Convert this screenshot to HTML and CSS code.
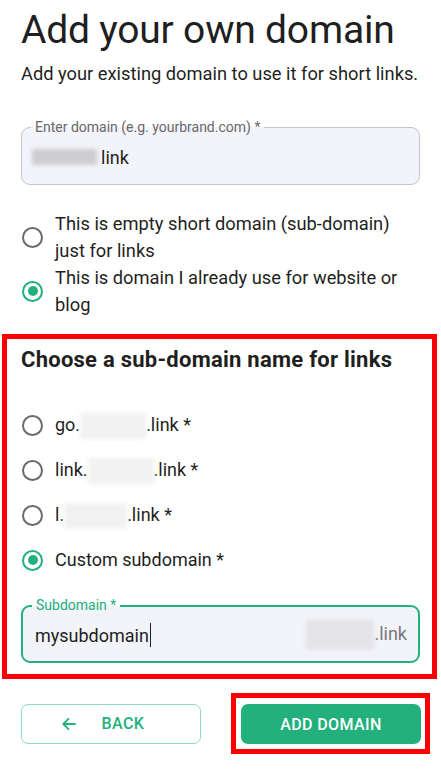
FILE: index.html
```html
<!DOCTYPE html>
<html>
<head>
<meta charset="utf-8">
<link rel="stylesheet" href="styles.css">
</head>
<body>
<div class="page">
  <h1 class="title">Add your own domain</h1>
  <p class="subtitle">Add your existing domain to use it for short links.</p>

  <div class="field">
    <span class="field-label">Enter domain (e.g. yourbrand.com) *</span>
    <div class="field-value"><span class="blur blur-dark"></span><span>link</span></div>
  </div>

  <div class="radio-group">
    <label class="radio">
      <span class="circle"></span>
      <span class="radio-text">This is empty short domain (sub-domain) just for links</span>
    </label>
    <label class="radio">
      <span class="circle checked"></span>
      <span class="radio-text">This is domain I already use for website or blog</span>
    </label>
  </div>
</div>

<section class="highlight">
  <h2 class="section-title">Choose a sub-domain name for links</h2>
  <div class="options">
    <div class="option"><span class="circle"></span><span class="opt-text">go.<span class="blur blur-light w66"></span>.link *</span></div>
    <div class="option"><span class="circle"></span><span class="opt-text">link.<span class="blur blur-light w66"></span>.link *</span></div>
    <div class="option"><span class="circle"></span><span class="opt-text">l.<span class="blur blur-light w63"></span>.link *</span></div>
    <div class="option"><span class="circle checked"></span><span class="opt-text">Custom subdomain *</span></div>
  </div>
  <div class="field field-active">
    <span class="field-label">Subdomain *</span>
    <div class="field-value"><span class="typed">mysubdomain</span><span class="caret"></span><span class="suffix"><span class="blur blur-mid"></span>.link</span></div>
  </div>
</section>

<div class="actions">
  <button class="btn btn-outline">
    <svg width="14" height="14" viewBox="0 0 14 14" fill="none" stroke="currentColor" stroke-width="1.8" stroke-linecap="round" stroke-linejoin="round"><path d="M13 7H1.5M6.5 1.8L1.3 7l5.2 5.2"/></svg>
    <span>BACK</span>
  </button>
  <div class="mark">
    <button class="btn btn-filled">ADD DOMAIN</button>
  </div>
</div>
</body>
</html>
```
FILE: styles.css
```css
* { box-sizing: border-box; }
body {
  margin: 0;
  font-family: Roboto, "Noto Sans", sans-serif;
  color: #1f1f22;
  background: #fff;
  width: 441px;
}
.page { padding: 0 21px; }
.title {
  margin: 0;
  padding-top: 8px;
  font-size: 39px;
  font-weight: 400;
  line-height: 44px;
  letter-spacing: -0.2px;
}
.subtitle {
  margin: 10px 0 0;
  font-size: 18.3px;
  line-height: 24px;
}
.field {
  position: relative;
  margin-top: 41px;
  height: 58px;
  border: 1px solid #c4c4c9;
  border-radius: 9px;
  background: #f3f4f9;
  display: flex;
  align-items: center;
  padding: 0 10px;
}
.field-label {
  position: absolute;
  top: -9px;
  left: 9px;
  padding: 0 4px;
  font-size: 14px;
  line-height: 16px;
  color: #68686d;
  background: linear-gradient(#fff 50%, #f3f4f9 50%);
}
.field-value {
  display: flex;
  align-items: center;
  font-size: 18px;
  width: 100%;
  margin-top: 2px;
}
.blur { display: inline-block; filter: blur(2px); }
.blur-dark {
  width: 65px; height: 16px;
  background: #cdcdd1;
  margin-right: 4px;
}
.blur-light {
  width: 66px; height: 26px;
  background: #f1f1f2;
  vertical-align: -8px;
}
.w63 { width: 63px; }
.blur-mid {
  width: 68px; height: 30px;
  background: #e3e3e8;
  vertical-align: -10px;
}
.radio-group {
  margin-top: 25px;
  display: flex;
  flex-direction: column;
}
.radio {
  display: flex;
  align-items: center;
  gap: 12px;
}
.circle {
  flex: none;
  width: 21px; height: 21px;
  border: 2px solid #6a6a6d;
  border-radius: 50%;
  position: relative;
  margin-left: 1px;
}
.circle.checked { border-color: #22b07d; }
.circle.checked::after {
  content: "";
  position: absolute;
  left: 3.5px; top: 3.5px;
  width: 10px; height: 10px;
  border-radius: 50%;
  background: #22b07d;
}
.radio-text {
  font-size: 18.3px;
  line-height: 27px;
  padding-right: 12px;
}
.highlight {
  margin: 16px 4px 0 2px;
  border: 5px solid #ff0000;
  padding: 8px 12px 11px 14px;
}
.section-title {
  margin: 0;
  font-size: 22px;
  font-weight: 700;
  line-height: 26px;
  letter-spacing: 0.25px;
}
.options {
  margin-top: 39px;
  display: flex;
  flex-direction: column;
  gap: 19px;
}
.option {
  display: flex;
  align-items: center;
  gap: 12px;
  height: 26px;
}
.opt-text { font-size: 18px; line-height: 26px; white-space: nowrap; }
.field-active {
  margin-top: 32px;
  border: 2px solid #22b07d;
  padding: 0 11px 0 12px;
}
.field-active .field-label {
  top: -10px;
  color: #22b07d;
  left: 9px;
}
.typed { color: #1f1f22; }
.caret { width: 1px; height: 24px; background: #1f1f22; margin-left: 1px; }
.suffix { margin-left: auto; color: #77777c; }
.actions {
  margin-top: 14px;
  padding: 0 11px 0 21px;
  display: flex;
  justify-content: space-between;
  align-items: center;
}
.btn {
  width: 180px;
  height: 40px;
  border-radius: 7px;
  font-family: Roboto, sans-serif;
  font-size: 16px;
  font-weight: 500;
  letter-spacing: 0.4px;
  display: flex;
  align-items: center;
  justify-content: center;
  cursor: pointer;
}
.btn-outline {
  background: #fff;
  border: 1px solid #90dcbe;
  color: #22b07d;
  gap: 26px;
  padding: 0 16px 0 0;
}
.btn-filled {
  background: #22b07d;
  border: none;
  color: #fff;
}
.mark {
  border: 5px solid #ff0000;
  padding: 6px 4px 5px 5px;
}
```
